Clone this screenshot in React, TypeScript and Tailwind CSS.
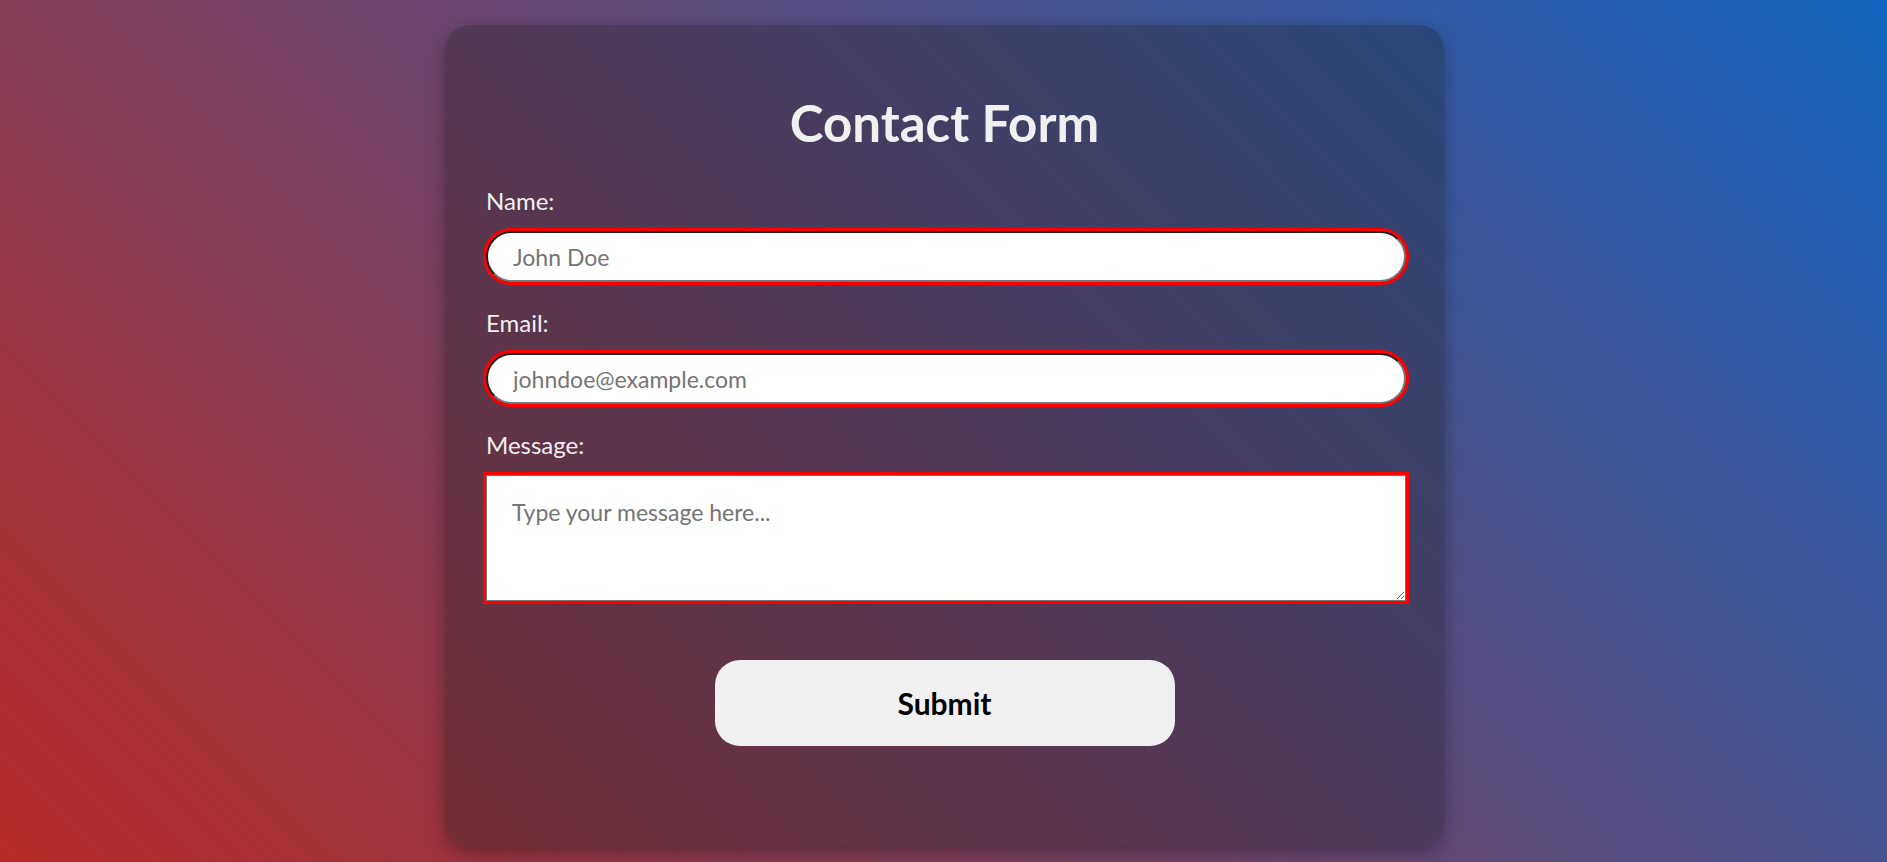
import { useState } from "react";

export default function App() {
  const [name, setName] = useState("");
  const [email, setEmail] = useState("");
  const [message, setMessage] = useState("");

  const fieldClass =
    "block w-[calc(100%+3px)] bg-white text-[23px] text-black placeholder:text-[#757575] outline-[3px] outline-solid outline-[#ff0000]";

  return (
    <div className="min-h-screen w-full bg-[linear-gradient(45deg,#b92b27,#1565c0)] pt-[25px] pb-[15px] pl-[2px] font-['Lato',sans-serif]">
      <div className="mx-auto w-[999px] rounded-[25px] bg-[rgba(28,28,28,0.32)] px-[41px] pt-[68px] pb-[101px] shadow-[0_6px_18px_rgba(0,0,0,0.35)]">
        <h1 className="text-center text-[51px] leading-[60px] font-bold text-[#f0f0f0]">Contact Form</h1>

        <form className="mt-[33px] flex flex-col" onSubmit={(e) => e.preventDefault()}>
          {/* Nombre */}
          <label htmlFor="name" className="block text-[24px] leading-[30px] text-[#f0f0f0]">
            Name:
          </label>
          <input
            id="name"
            type="text"
            value={name}
            onChange={(e) => setName(e.target.value)}
            placeholder="John Doe"
            className={`${fieldClass} mt-[15px] h-[51px] rounded-full border-2 border-t-[#1f1f1f] border-l-[#1f1f1f] border-r-[#767676] border-b-[#767676] pl-[25px]`}
          />

          {/* Email */}
          <label htmlFor="email" className="mt-[26px] block text-[24px] leading-[30px] text-[#f0f0f0]">
            Email:
          </label>
          <input
            id="email"
            type="email"
            value={email}
            onChange={(e) => setEmail(e.target.value)}
            placeholder="johndoe@example.com"
            className={`${fieldClass} mt-[15px] h-[51px] rounded-full border-2 border-t-[#1f1f1f] border-l-[#1f1f1f] border-r-[#767676] border-b-[#767676] pl-[25px]`}
          />

          {/* Mensaje */}
          <label htmlFor="message" className="mt-[26px] block text-[24px] leading-[30px] text-[#f0f0f0]">
            Message:
          </label>
          <textarea
            id="message"
            value={message}
            onChange={(e) => setMessage(e.target.value)}
            placeholder="Type your message here..."
            className={`${fieldClass} mt-[15px] h-[126px] border border-[#767676] px-[25px] pt-[19px] leading-normal`}
          />

          <button
            type="submit"
            className="mx-auto mt-[59px] h-[86px] w-[460px] rounded-[25px] bg-[#f0f0f0] text-[30px] font-bold text-black"
          >
            Submit
          </button>
        </form>
      </div>
    </div>
  );
}
